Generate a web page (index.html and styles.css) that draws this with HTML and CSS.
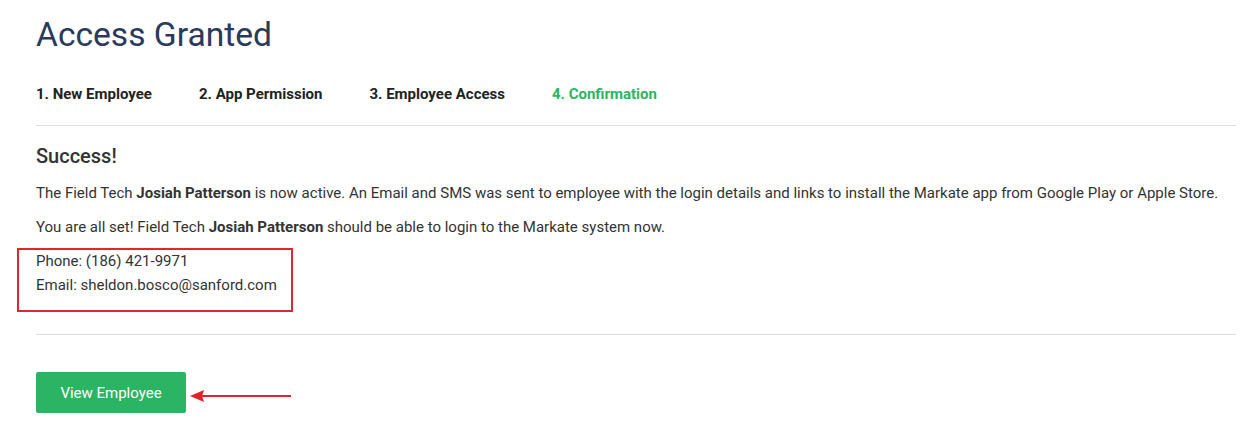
FILE: index.html
```html
<!DOCTYPE html>
<html lang="en">
<head>
<meta charset="utf-8">
<title>Access Granted</title>
<link rel="stylesheet" href="styles.css">
</head>
<body>
<div class="page">
  <h1 class="title">Access Granted</h1>
  <nav class="steps">
    <span class="step">1. New Employee</span>
    <span class="step">2. App Permission</span>
    <span class="step">3. Employee Access</span>
    <span class="step step-active">4. Confirmation</span>
  </nav>
  <div class="section">
    <h2 class="heading">Success!</h2>
    <p class="text">The Field Tech <b>Josiah Patterson</b> is now active. An Email and SMS was sent to employee with the login details and links to install the Markate app from Google Play or Apple Store.</p>
    <p class="text">You are all set! Field Tech <b>Josiah Patterson</b> should be able to login to the Markate system now.</p>
    <div class="contact">
      <div class="contact-line">Phone: (186) 421-9971</div>
      <div class="contact-line">Email: sheldon.bosco@sanford.com</div>
      <div class="highlight-box"></div>
    </div>
  </div>
  <div class="actions">
    <button class="btn">View Employee</button>
    <svg class="arrow" width="102" height="14" viewBox="0 0 102 14">
      <line x1="10" y1="7" x2="101" y2="7" stroke="#e2232a" stroke-width="2"/>
      <polygon points="0,7 14,1 12,7 14,13" fill="#e2232a"/>
    </svg>
  </div>
</div>
</body>
</html>
```
FILE: styles.css
```css
html, body {
  margin: 0;
  padding: 0;
  background: #ffffff;
}
body {
  font-family: Roboto, "Liberation Sans", Arial, sans-serif;
  color: #333333;
}
.page {
  width: 1200px;
  padding: 15px 17px 0 36px;
}
.title {
  margin: 0;
  font-size: 33.6px;
  line-height: 40px;
  font-weight: 400;
  color: #2b3a5c;
}
.steps {
  display: flex;
  gap: 47px;
  margin-top: 29px;
  padding-bottom: 21px;
  border-bottom: 1px solid #dfdfdf;
}
.step {
  font-size: 15px;
  line-height: 20px;
  font-weight: 700;
  color: #222222;
}
.step-active {
  color: #2ab463;
}
.section {
  padding-top: 18px;
  padding-bottom: 37px;
  border-bottom: 1px solid #dfdfdf;
}
.heading {
  margin: 0 0 13px;
  font-size: 20px;
  line-height: 24px;
  font-weight: 500;
  color: #333333;
}
.text {
  margin: 0 0 10px;
  font-size: 15px;
  line-height: 24px;
  color: #333333;
}
.text b {
  font-weight: 700;
}
.contact {
  position: relative;
  font-size: 15px;
  line-height: 24px;
  color: #333333;
}
.highlight-box {
  position: absolute;
  left: -19px;
  top: -1px;
  width: 272px;
  height: 60px;
  border: 2px solid #e3262b;
  pointer-events: none;
}
.actions {
  display: flex;
  align-items: center;
  gap: 4px;
  padding-top: 37px;
  padding-bottom: 14px;
}
.btn {
  width: 150px;
  height: 41px;
  border: none;
  border-radius: 2px;
  background: #2ab463;
  color: #ffffff;
  font-family: Roboto, "Liberation Sans", Arial, sans-serif;
  font-size: 15px;
  font-weight: 400;
  padding: 0;
}
.arrow {
  display: block;
  margin-top: 6px;
}
```
